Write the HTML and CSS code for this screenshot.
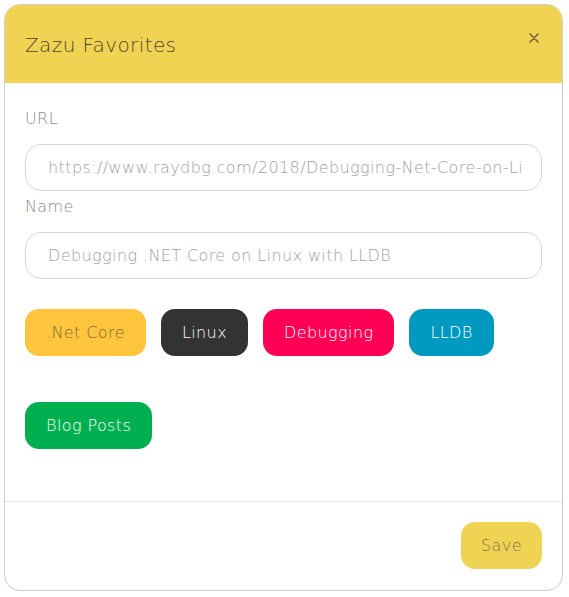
FILE: index.html
```html
<!DOCTYPE html>
<html>
<head>
<meta charset="utf-8">
<link rel="stylesheet" href="styles.css">
</head>
<body>
<div class="card">
  <div class="header">
    <h1 class="title">Zazu Favorites</h1>
    <button class="close" aria-label="Close">
      <svg width="10" height="10" viewBox="0 0 10 10"><path d="M1 1L9 9M9 1L1 9" stroke="#6e6436" stroke-width="1.6" stroke-linecap="round"/></svg>
    </button>
  </div>
  <div class="content">
    <label class="label">URL</label>
    <input class="field" type="text" value="https://www.raydbg.com/2018/Debugging-Net-Core-on-Linux-with-LLDB" readonly>
    <label class="label">Name</label>
    <input class="field" type="text" value="Debugging .NET Core on Linux with LLDB" readonly>
    <div class="tags">
      <span class="tag tag-net">.Net Core</span>
      <span class="tag tag-linux">Linux</span>
      <span class="tag tag-debug">Debugging</span>
      <span class="tag tag-lldb">LLDB</span>
      <span class="tag tag-blog">Blog Posts</span>
    </div>
  </div>
  <div class="footer">
    <button class="save">Save</button>
  </div>
</div>
</body>
</html>
```

FILE: styles.css
```css
* { box-sizing: border-box; }
html, body { margin: 0; padding: 0; background: #fff; }
body {
  padding: 4px 6px 6px 4px;
  font-family: "DejaVu Sans", sans-serif;
  font-weight: 200;
  letter-spacing: 0.4px;
}
.card {
  width: 559px;
  height: 587px;
  border: 1px solid #cccccc;
  border-radius: 16px;
  overflow: hidden;
  display: flex;
  flex-direction: column;
}
.header {
  background: #f0d352;
  height: 78px;
  display: flex;
  align-items: center;
  justify-content: space-between;
  padding: 0 22px 0 20px;
}
.title {
  margin: 0;
  font-size: 20px;
  font-weight: 200;
  color: #4a4630;
  padding-top: 1px;
}
.close {
  background: none;
  border: 0;
  padding: 0;
  width: 12px;
  height: 12px;
  display: flex;
  align-items: center;
  justify-content: center;
  margin-bottom: 12px;
}
.content {
  flex: 1;
  padding: 24px 20px 0 20px;
  display: flex;
  flex-direction: column;
  border-bottom: 1px solid #e6e6e6;
}
.label {
  font-size: 16px;
  line-height: 24px;
  color: #8c8c8c;
  margin-bottom: 13px;
}
.field {
  height: 47px;
  border: 1px solid #d3d5da;
  border-radius: 16px;
  padding: 0 20px 0 22px;
  font-family: inherit;
  font-weight: 200;
  letter-spacing: inherit;
  font-size: 16px;
  color: #a0a0a8;
  outline: none;
  margin-bottom: 4px;
  width: 100%;
}
.tags {
  margin-top: 26px;
  display: flex;
  flex-wrap: wrap;
  column-gap: 15px;
  row-gap: 46px;
  width: 500px;
}
.tag {
  height: 47px;
  padding: 0 21px;
  border-radius: 14px;
  display: inline-flex;
  align-items: center;
  font-size: 16px;
  color: #fff;
}
.tag-net { background: #ffc53d; color: #7a6a3a; }
.tag-linux { background: #333333; }
.tag-debug { background: #ff0055; }
.tag-lldb { background: #0099bf; }
.tag-blog { background: #00b050; }
.footer {
  height: 88px;
  flex-shrink: 0;
  display: flex;
  justify-content: flex-end;
  align-items: flex-start;
  padding: 20px 20px 0 0;
}
.save {
  height: 47px;
  width: 81px;
  border: 0;
  border-radius: 14px;
  background: #f0d352;
  font-family: inherit;
  font-weight: 200;
  letter-spacing: inherit;
  font-size: 16px;
  color: #7a7350;
}
```
